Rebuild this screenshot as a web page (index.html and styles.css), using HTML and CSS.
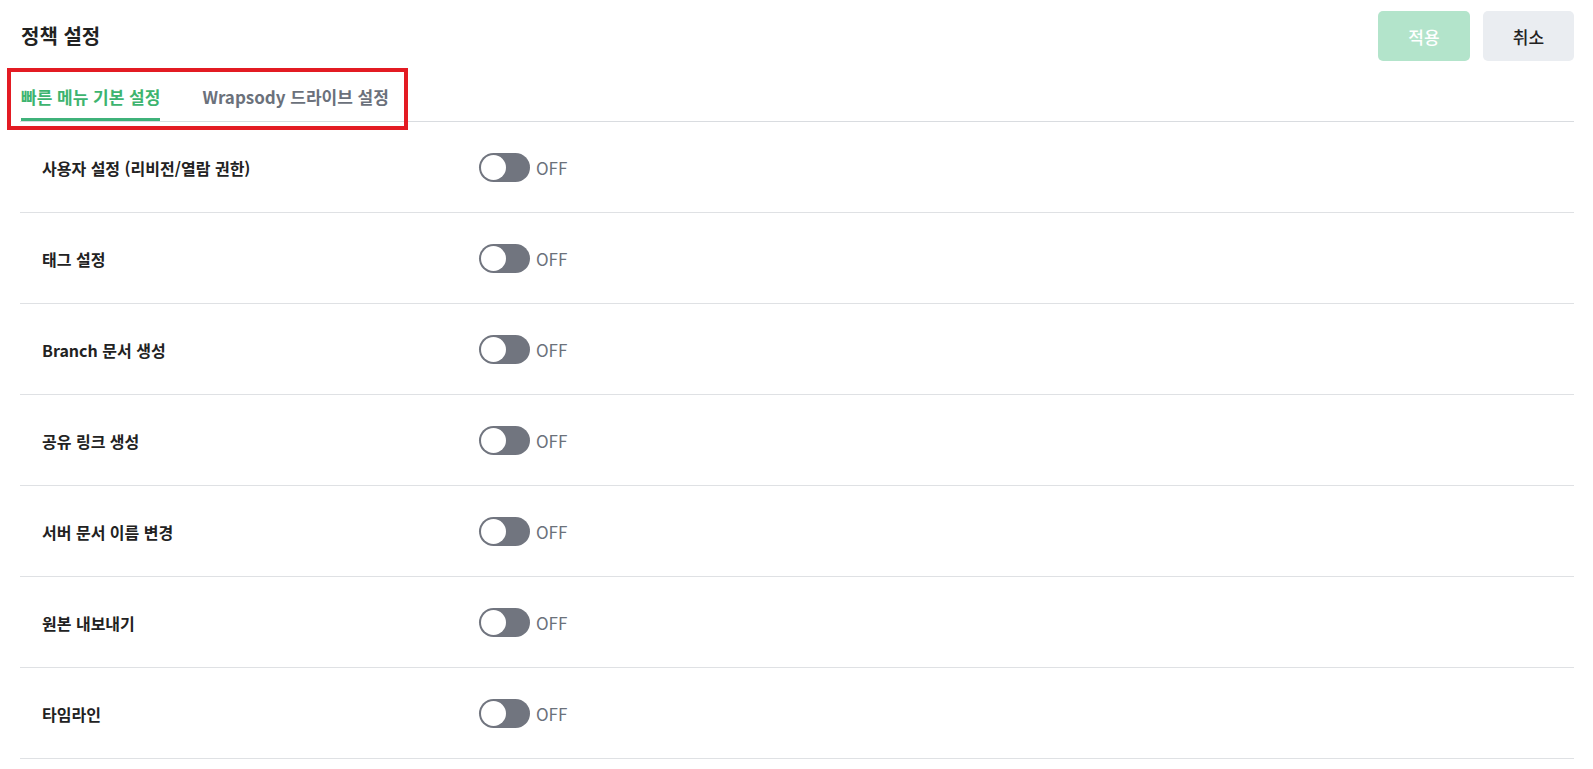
FILE: index.html
```html
<!DOCTYPE html>
<html lang="ko">
<head>
<meta charset="utf-8">
<title>정책 설정</title>
<link rel="stylesheet" href="styles.css">
</head>
<body>
<div class="page">
  <header class="header">
    <h1 class="title">정책 설정</h1>
    <div class="actions">
      <button class="btn btn-apply">적용</button>
      <button class="btn btn-cancel">취소</button>
    </div>
  </header>
  <nav class="tabs">
    <div class="tab active">빠른 메뉴 기본 설정</div>
    <div class="tab">Wrapsody 드라이브 설정</div>
    <div class="annot"></div>
  </nav>
  <ul class="rows">
    <li class="row"><span class="label">사용자 설정 (리비전/열람 권한)</span><span class="switch"><span class="track"><span class="knob"></span></span><span class="state">OFF</span></span></li>
    <li class="row"><span class="label">태그 설정</span><span class="switch"><span class="track"><span class="knob"></span></span><span class="state">OFF</span></span></li>
    <li class="row"><span class="label">Branch 문서 생성</span><span class="switch"><span class="track"><span class="knob"></span></span><span class="state">OFF</span></span></li>
    <li class="row"><span class="label">공유 링크 생성</span><span class="switch"><span class="track"><span class="knob"></span></span><span class="state">OFF</span></span></li>
    <li class="row"><span class="label">서버 문서 이름 변경</span><span class="switch"><span class="track"><span class="knob"></span></span><span class="state">OFF</span></span></li>
    <li class="row"><span class="label">원본 내보내기</span><span class="switch"><span class="track"><span class="knob"></span></span><span class="state">OFF</span></span></li>
    <li class="row"><span class="label">타임라인</span><span class="switch"><span class="track"><span class="knob"></span></span><span class="state">OFF</span></span></li>
  </ul>
</div>
</body>
</html>
```

FILE: styles.css
```css
* { box-sizing: border-box; }
html, body { margin: 0; padding: 0; background: #fff; }
body {
  font-family: "Noto Sans CJK KR", "Noto Sans", sans-serif;
  color: #222;
}
.page { padding: 0 19px 0 20px; }
.header {
  height: 72px;
  display: flex;
  align-items: flex-start;
  justify-content: space-between;
}
.title {
  margin: 0;
  padding-top: 22px;
  font-size: 20px;
  line-height: 28px;
  font-weight: 700;
  color: #222;
  padding-left: 1px;
}
.actions {
  display: flex;
  gap: 13px;
  padding-top: 11px;
}
.btn {
  width: 91px;
  height: 50px;
  border: none;
  border-radius: 5px;
  font-family: "Noto Sans CJK KR", "Noto Sans", sans-serif;
  font-size: 17px;
  font-weight: 500;
  padding: 0;
}
.btn-apply { background: #b3e4cb; color: #fff; width: 92px; }
.btn-cancel { background: #eaedf1; color: #222; }
.tabs {
  position: relative;
  display: flex;
  gap: 42px;
  border-bottom: 1px solid #d9dce0;
  padding-left: 1px;
}
.tab {
  font-size: 17px;
  font-weight: 700;
  line-height: 24px;
  padding: 13px 0 9px;
  border-bottom: 3px solid transparent;
  color: #6b717b;
}
.tab.active { color: #3db46f; border-bottom-color: #3fb27a; }
.annot {
  position: absolute;
  left: -13px;
  top: -4px;
  width: 401px;
  height: 62px;
  border: 4px solid #e31b23;
}
.rows { list-style: none; margin: 0; padding: 0; }
.row {
  height: 91px;
  display: flex;
  align-items: center;
  border-bottom: 1px solid #dfe1e4;
  padding-left: 22px;
  padding-top: 1px;
}
.label {
  width: 437px;
  font-size: 16px;
  font-weight: 700;
  color: #222;
}
.switch { display: flex; align-items: center; gap: 6px; }
.track {
  width: 51px;
  height: 29px;
  border-radius: 15px;
  background: #71757f;
  padding: 2px;
  display: flex;
  align-items: center;
}
.knob {
  width: 25px;
  height: 25px;
  border-radius: 50%;
  background: #fff;
}
.state {
  font-size: 17px;
  color: #6b717b;
  line-height: 24px;
}
```
